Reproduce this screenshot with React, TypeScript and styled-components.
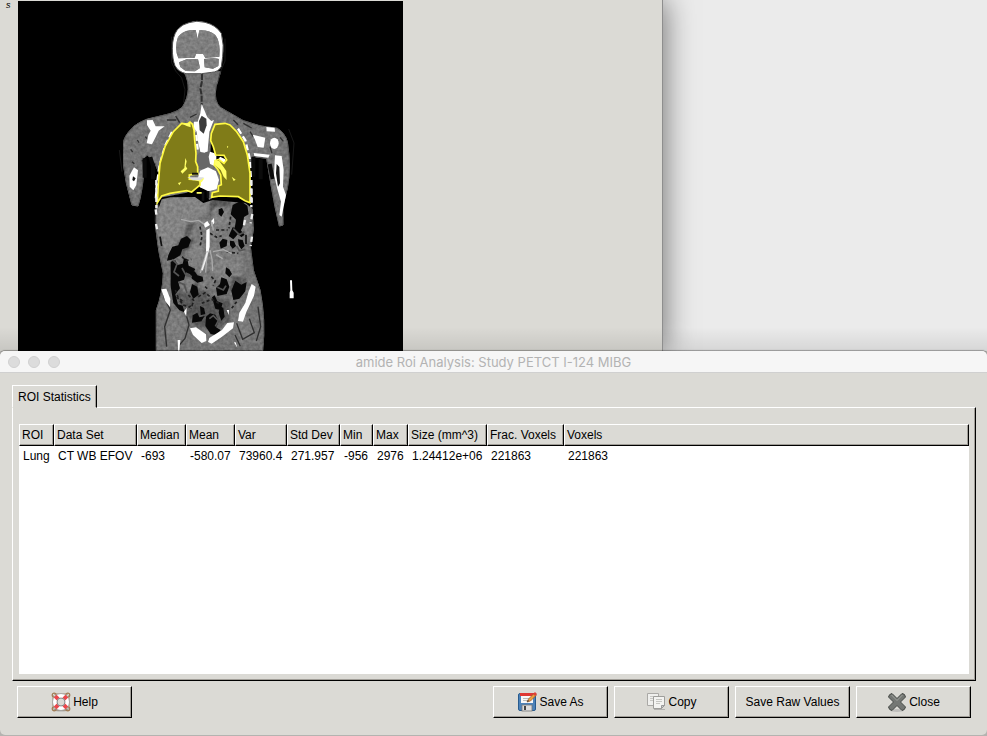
import React from "react";
import styled, { createGlobalStyle, css } from "styled-components";

const face = "#dbdad5";

const GlobalStyle = createGlobalStyle`
  * { box-sizing: border-box; }
  body {
    margin: 0;
    background: #b4b3b0;
    color: #000;
    font: 12px/16px "Liberation Sans", Arial, Helvetica, sans-serif;
  }
`;

const raised = css`
  border: 1px solid;
  border-color: #fff #000 #000 #fff;
  box-shadow: inset -1px -1px 0 #a09d97;
`;

const Page = styled.div`
  display: flex;
  flex-direction: column;
  min-height: 100vh;
`;

const Desktop = styled.div`
  display: flex;
  background: linear-gradient(transparent calc(100% - 24px), rgba(0, 0, 0, 0.09)), #ebebeb;
`;

const StudyWindow = styled.main`
  display: flex;
  flex: 0 1 663px;
  padding-top: 1px;
  background: linear-gradient(transparent calc(100% - 24px), rgba(0, 0, 0, 0.09)), ${face};
  border-right: 1px solid #8e8e8e;
  box-shadow: 2px 0 28px rgba(0, 0, 0, 0.5);
  clip-path: inset(0 -40px 0 0);
`;

const AxisLabel = styled.span`
  width: 18px;
  padding-left: 6px;
  font: italic 9px/9px "Liberation Sans", Arial, sans-serif;
`;

const ScanView = styled.svg`
  display: block;
  width: 385px;
  height: 350px;
  background: #000;
`;

const Dialog = styled.section`
  display: flex;
  flex: 1;
  flex-direction: column;
  margin-bottom: 1px;
  background: ${face};
  border-radius: 5px;
  overflow: hidden;
  box-shadow: 0 -1px 1px rgba(0, 0, 0, 0.3);
  position: relative;
`;

const TitleBar = styled.header`
  display: grid;
  grid-template-columns: 1fr auto 1fr;
  align-items: center;
  height: 22px;
  padding: 0 8px;
  background: #f6f6f6;
  border-bottom: 1px solid #d0d0d0;
`;

const WindowControls = styled.div`
  display: flex;
  gap: 8px;
`;

const WindowControl = styled.button`
  width: 12px;
  height: 12px;
  padding: 0;
  border: 1px solid #d0d0d0;
  border-radius: 50%;
  background: #dcdcdc;
`;

const Title = styled.h1`
  margin: 0;
  color: #b3b3b3;
  font: 400 13px/20px Inter, Roboto, sans-serif;
`;

const DialogBody = styled.div`
  display: flex;
  flex: 1;
  flex-direction: column;
  padding: 12px 11px 17px 12px;
`;

const Tab = styled.button`
  align-self: flex-start;
  height: 23px;
  margin-bottom: -1px;
  padding: 0 5px;
  background: ${face};
  border: 1px solid;
  border-color: #fff #000 ${face} #fff;
  box-shadow: inset -1px 0 0 #a09d97;
  color: inherit;
  font: inherit;
  z-index: 1;
`;

const TabPanel = styled.div`
  ${raised}
  display: flex;
  flex: 1;
  padding: 16px 6px 6px;
`;

const ListView = styled.div`
  flex: 1;
  min-width: 0;
  background: #fff;
`;

const Table = styled.table`
  width: 100%;
  border-collapse: separate;
  border-spacing: 0;
  table-layout: fixed;
`;

const Column = styled.col<{ $width?: number }>`
  width: ${({ $width }) => ($width ? `${$width}px` : "auto")};
`;

const HeaderCell = styled.th`
  ${raised}
  height: 22px;
  padding: 0 2px;
  background: ${face};
  font-weight: 400;
  text-align: left;
  white-space: nowrap;
`;

const Cell = styled.td`
  height: 20px;
  padding: 0 0 0 4px;
  white-space: nowrap;
`;

const Actions = styled.footer`
  display: flex;
  gap: 6px;
  padding: 5px 5px 0;
`;

const ActionButton = styled.button<{ $first?: boolean }>`
  ${raised}
  display: flex;
  align-items: center;
  justify-content: center;
  gap: 2px;
  width: 115px;
  height: 32px;
  margin-right: ${({ $first }) => ($first ? "auto" : "0")};
  padding: 0;
  background: ${face};
  color: inherit;
  font: inherit;
`;

const Icon = styled.svg`
  width: 20px;
  height: 20px;
`;

const columns = [
  { label: "ROI", width: 35, value: "Lung" },
  { label: "Data Set", width: 83, value: "CT WB EFOV" },
  { label: "Median", width: 49, value: "-693" },
  { label: "Mean", width: 49, value: "-580.07" },
  { label: "Var", width: 52, value: "73960.4" },
  { label: "Std Dev", width: 53, value: "271.957" },
  { label: "Min", width: 33, value: "-956" },
  { label: "Max", width: 35, value: "2976" },
  { label: "Size (mm^3)", width: 79, value: "1.24412e+06" },
  { label: "Frac. Voxels", width: 77, value: "221863" },
  { label: "Voxels", width: undefined, value: "221863" },
];

const leftLung =
  "M95 70 113 72 120 66 127 72 132 90 134 120 138 160 137 185 143 200 143 222 118 225 118 238 150 240 150 255 138 265 125 276 110 272 60 280 35 288 22 308 25 250 30 190 45 140 70 95Z";
const rightLung =
  "M195 73 225 70 240 75 260 95 280 125 292 165 300 220 300 308 285 302 265 290 210 288 185 292 187 278 205 273 205 258 214 254 212 225 203 208 193 196 195 182 206 178 222 190 230 180 222 166 197 165 190 140 182 122 184 100Z";

const bowelGas = [
  "M175 765l12-25 18-4 8-20 18-8 12 12-8 22-18 6-6 18-20 12-20 4Z",
  "M182 785l14-4 6 14 16-4 4-16 10 2 4 20 20 10-10 18-18-8-6 22-18 6 6 20-14 18 8 30 14 4 6 20-16-6-18-22-8-50Z",
  "M240 820l14-6 8 12 16 4 2 14-18 4-16-12ZM246 852l16 8 4 24-16 12-10-20Z",
  "M328 728l10-12 14 4-2 18-18 8ZM360 722l12 2 6 14-10 8-8-10ZM384 718l14 2 6 18-10 10-8-12Z",
  "M356 708l12-26 20 4 16 18-10 8-10-10-14 16Z",
  "M368 615l24-12 20 14 4 26-14 8-4 30-12 22-14-4 6-40-16-16Z",
  "M326 628l10-4 6 12-8 14-8-8ZM348 802l10 6 8 14-8 10-12-12Z",
  "M318 864l12-12 4-20 16 6 8 22-8 22-28 6Z",
  "M364 872l12-30 18 12 16-8-4 28-18 22-18 4ZM306 892l8-6 8 18 16 6-6 20-16-4Z",
  "M248 946l14-8 6 14 16-4-10 16-28 4ZM288 950l12-10 16 4 10 20-8 18 14 8-12 16-18-4-16-24Z",
  "M330 918l10 6 4 26-10 12-8-24ZM270 918l12 6 4 18-14 4Z",
];

function ScanImage() {
  return (
    <ScanView viewBox="-276 3 1155 1050" role="img" aria-label="Coronal CT with lung region">
      <defs>
        <filter id="tissue" x="0" y="0" width="100%" height="100%" colorInterpolationFilters="sRGB">
          <feTurbulence type="fractalNoise" baseFrequency=".1" numOctaves="2" seed="8" result="noise" />
          <feColorMatrix in="noise" values=".2 0 0 0 .4 .2 0 0 0 .4 .2 0 0 0 .4 0 0 0 0 1" />
          <feComposite in2="SourceGraphic" operator="in" result="grain" />
          <feBlend in="SourceGraphic" in2="grain" mode="soft-light" />
        </filter>
        <filter id="soften" x="-5%" y="-5%" width="110%" height="110%">
          <feGaussianBlur stdDeviation="3" />
        </filter>
      </defs>
      <g filter="url(#tissue)">
        <path fill="#686868" stroke="#333" strokeWidth="3" d="M222 215C240 250 240 285 217 322Q205 333 180 341L110 358Q75 372 62 389 42 410 40 430L39 485Q46 550 66 615L84 618Q96 580 101 520L95 480 112 465 135 490 147 520 142 600 138 690Q144 750 160 820 158 880 139 930L139 1052H458Q468 960 450 870L430 810 421 740 430 690 424 590 418 510 428 470 470 475 484 560 495 620 508 678 519 675 518 620 532 565Q544 500 532 425 525 400 502 385 450 382 400 362L332 323Q310 305 318 260L332 215Z" />
        <g filter="url(#soften)">
          <path fill="#898989" d="M142 605 175 585 245 580 306 590 300 630 270 650 250 690 225 725 205 740 173 760 150 720 139 660Z" />
          <path fill="#777" d="M248 655 280 650 300 680 390 700 402 740 398 820 360 855 310 820 280 810 270 850 230 840 230 770 205 750Z" />
          <path fill="#858585" d="M305 625 345 620 360 650 350 680 315 680ZM400 620 415 650 420 700 405 710ZM232 740 270 728 282 760 270 800 235 790ZM315 790 350 775 387 795 390 830 350 848 315 825ZM285 930 325 925 340 965 315 990 285 980Z" />
          <path fill="#333" d="M232 670 252 666 246 695 225 725 222 695ZM200 720 255 716 245 740 210 770ZM185 800 250 805 280 840 300 870 280 930 240 960 200 900ZM250 945 300 890 360 900 360 960 320 988 250 978ZM365 825 410 835 385 898 360 870ZM300 595 365 600 360 618 315 622 296 650Z" />
          <path fill="#777" d="M214 832h30l12 18-8 22-24 10-18-22ZM258 830 310 825 316 850 292 876 266 866ZM172 950 205 925 225 960 218 1015 190 1025 170 990ZM375 965 402 945 432 970 430 1010 400 1030 382 1005Z" />
        </g>
      </g>
      <g fill="none" stroke="#303030" strokeWidth="6">
        <path d="M276 222v22l-5 22 4 20v28" strokeDasharray="18 4" />
        <path d="M171 360h28M197 348l12 20M240 352l20-10M370 360l14 14M400 370l25 14M510 412l10 12" strokeWidth="4" />
        <path d="M104 475v58M121 471l8 27v40M430 470v60M452 478v60M479 492l9 45" strokeWidth="12" stroke="#0b0b0b" />
        <path d="M160 885 181 930 164 980 170 1040M226 935 237 975 225 1015 204 1040M380 970l18 48 35-20-15-42M444 920l8 60-13 43M375 1005l16 34" strokeWidth="4" />
        <path d="M150 710l5 28M408 704v28" strokeWidth="5" stroke="#111" />
        <path d="M62 448l6 8M82 420l5 8M66 485l7 6M106 410l5 6M480 440l6 20M420 395l10 15" strokeWidth="4" />
      </g>
      <path fill="#fff" stroke="#555" strokeWidth="3" d="M237 68Q260 60 285 67 318 75 334 100 343 137 338 170L334 200Q325 216 305 217L275 221 228 221Q204 215 195 197 187 178 187 145 187 110 202 89 217 72 237 68Z" />
      <path fill="#7d7d7d" filter="url(#tissue)" d="M240 91 257 90 263 116 268 91Q300 90 316 105 328 120 329 150L328 170 286 174 279 161 258 162 254 173 205 175Q192 145 204 111 216 94 240 91ZM207 187 230 178 264 178 270 204 255 214 227 213 211 201ZM282 177 310 174 327 177 325 198 309 206 284 202Z" />
      <g fill="#080808">{bowelGas.map((shape) => <path key={shape} d={shape} />)}</g>
      <g fill="none" stroke="#555" strokeWidth="5">
        <path d="M187 778l14 14-9 24 15 12M216 804l12 22 18 4M205 846l18 8 8 25M370 686l18 18 15-9M380 738l8 14 18-4M298 956l12-9 15 15-9 17M322 862l18 8 8-13" />
      </g>
      <g fill="none" stroke="#202020" strokeWidth="5" strokeDasharray="9 7">
        <path d="M200 890l20 25 18 6 12-12M235 885l16 16-8 26M265 890l20-12 15 12M275 910l30-12 22 12M285 860l12 10M216 770l12 12 16-4M300 700l20 12 15-5M318 690h35M362 650l-5 35M350 756l35 4M270 680l6 30-6 30M304 830l12 12-6 16M380 905l-15 20M196 870l8 22 16 14" />
      </g>
      <g fill="#fff">
        <path d="M275 312 284 333 292 352 304 363 312 360 306 374 298 396 295 430 292 458 272 459 265 430 260 395 250 380 252 365 263 365 271 340Z" />
        <path fill="#3b3b3b" d="M275 347 289 356 290 376 281 401 269 391 267 363Z" />
        <path d="M111 361 128 360 137 379 164 379 146 392 139 407 126 433 110 430 115 405 122 392 111 375ZM428 404l38 9-5 30-18-2-8-22ZM431 459l48 5-4 9-42-5ZM469 381l25 2 1 12-25-1Z" />
        <ellipse cx="493" cy="430" rx="13" ry="17" />
        <path d="M72 502 84 511 79 555 70 571 59 560 58 527ZM495 466 515 468 521 510 519 560 528 585 515 650 508 645 513 605 502 567 492 525Z" />
        <path fill="#171717" d="M69 529 77 535 72 544 67 540ZM500 492l8 9 2 49-6 10-6-40Z" />
        <path d="M540 841h6l1 30 4 7v17h-12v-17l2-7ZM154 868l15-2 12 31-1 24-14-17ZM425 852l12 8-5 27-23 49-10 29-15-2 4-25 18-29 10-35ZM240 985l18-3 30 21 1 20-14 6-26-24ZM298 1014l38-24 16-21 20-2-3 18-34 26-30 20-11-5ZM222 935l8-12-1 27ZM350 930h7l-1 15ZM203 1020h8l-3 32h-4ZM372 1027h5l5 16Z" />
        <path d="M289 691l10-6v55l-4 18-7-2ZM281 671l11-8 8 12-15 8ZM304 662l8-8 1 14-8 12Z" />
      </g>
      <path d="M213 658l29 7 24-4 17 12M306 666l4 26M292 754l-10 27-11 38M293 758l-4 30-2 30M300 750l6 28 2 36M309 755l32-6 24 12M318 764l20 12" fill="none" stroke="#aaa" strokeWidth="4" />
      <path d="M292 757l-6 22-10 32" fill="none" stroke="#eee" strokeWidth="5" />
      <g transform="translate(120 300)">
        <path fill="#000" d="M183 117 202 155 225 165 234 190 221 213 210 190 180 190ZM22 295 110 278 145 260 172 269 177 300 202 286 225 284 263 280 309 311 309 327 286 309 188 300 160 309 135 291 62 292 35 298 26 324Z" />
        <path fill="#676767" d="M139 168 151 155 177 155 183 187 175 207 145 207Z" />
        <path fill="#fff" d="M147 103h28l-3 50-8 5-12-2ZM180 155 199 161 199 180 192 197 180 192 176 170ZM150 212 174 202 198 214 207 240 200 268 175 274 150 262 142 240ZM210 170 226 178 230 200 218 207 203 184Z" />
        <path d="M133 80v17l6 7 4 45M66 96l-21 43-16 55-9 64-3 46M264 86l22 35 13 54 4 65 2 68" fill="none" stroke="#fff" strokeWidth="7" strokeDasharray="18 9" />
        <path fill="#807c18" stroke="#fff943" strokeWidth="5" d={leftLung} />
        <path fill="#807c18" stroke="#fff943" strokeWidth="5" d={rightLung} />
        <path fill="#ffff66" d="M98 72 121 69 122 82 110 78ZM106 174l4 10-3 14 5 8-15 15-5-7 11-10ZM84 249l10-3-6 10ZM193 180l15 3 21 30 1 27-9-10-9-20-18-15ZM245 230l12 9-6 4ZM231 137l4 3-3 5ZM118 235h45l-8 12ZM140 276h18v5h-18Z" />
        <path fill="#111" d="M155 275h8v28h-8ZM170 273h8v21h-8ZM126 218h18v6h-18Z" />
        <path fill="#ddd" d="M112 232h50l-10 9h-24Z" />
      </g>
      <g stroke="#eee" strokeWidth="7" fill="none">
        <path d="M139 540v85M137 628l3 24M138 672l5 24M424 540v82M427 642l-5 28M426 710l-4 28M405 660l-4 20" strokeDasharray="16 9" />
      </g>
      <g fill="none" stroke="#252525" strokeWidth="2">
        <path d="M185 110v78l12 25 18 21 10 35-4 39M345 116v67l-14 33-7 30M28 450l8 65M536 387l16 42-7 95" />
      </g>
    </ScanView>
  );
}

function HelpIcon() {
  return (
    <Icon viewBox="0 0 20 20" aria-hidden="true">
      <ellipse cx="10" cy="17.5" rx="8" ry="2" fill="#888" opacity=".5" />
      <g fill="none" stroke="#a07c56" strokeWidth="1.2"><circle cx="3.2" cy="3.2" r="2" /><circle cx="16.8" cy="3.2" r="2" /><circle cx="3.2" cy="16.8" r="2" /><circle cx="16.8" cy="16.8" r="2" /><path d="M3 2h14M3 18h14M2 3v14M18 3v14" strokeWidth=".8" /></g>
      <circle cx="10" cy="10" r="8.5" fill="#fff" stroke="#999" strokeWidth=".8" />
      <path d="m4.2 4.2 3 3M15.8 4.2l-3 3M4.2 15.8l3-3M15.8 15.8l-3-3" stroke="#ed474c" strokeWidth="4" />
      <circle cx="10" cy="10" r="4" fill={face} stroke="#888" strokeWidth="1" />
    </Icon>
  );
}

function SaveIcon() {
  return (
    <Icon viewBox="0 0 20 20" aria-hidden="true">
      <rect x="1.5" y="1.5" width="17" height="17" rx="1.5" fill="#4d83ba" stroke="#285b8e" />
      <path fill="#f8f8f8" d="M4 2h12v9H4z" /><path fill="#df3834" d="M3 1h14v3H3z" />
      <path d="M6 6.5h8M6 8.5h6" stroke="#bbb" /><rect x="5" y="13" width="10" height="6" fill="#ddd" stroke="#777" strokeWidth=".8" />
      <path d="M7 14h2v4H7z" fill="#444" />
      <path d="m10 10 1.5-3 6-6 2 2-6 6Z" fill="#ed9f3d" stroke="#8d562f" strokeWidth=".7" /><path d="m16 2 2-2 2 2-2 2Z" fill="#dd4036" /><path d="m10 10 1-2 1 1Z" fill="#333" />
    </Icon>
  );
}

function CopyIcon() {
  return (
    <Icon viewBox="0 0 20 20" aria-hidden="true">
      <path d="M8 17.5h11" stroke="#888" opacity=".5" />
      <path d="M1.5 1.5h11v12h-11z" fill="#efefed" stroke="#aaa9a6" /><path d="M4 4.5h7M4 6.5h7M4 8.5h5" stroke="#c8c8c5" />
      <path d="M7.5 4.5h11v9l-3 3h-8z" fill="#f3f3f1" stroke="#9e9e9b" /><path d="M10 7.5h6M10 9.5h6M10 11.5h4" stroke="#c5c5c1" /><path d="M15.5 16.5v-3h3z" fill="#ccc" stroke="#999" />
    </Icon>
  );
}

function CloseIcon() {
  return (
    <Icon viewBox="0 0 20 20" aria-hidden="true">
      <ellipse cx="10" cy="18.5" rx="7" ry="1.5" fill="#aaa" opacity=".6" />
      <path d="m5 1.5 5 5 5-5q3 0 3.5 3.5l-5 5 5 5q-.5 3-3.5 3.5l-5-5-5 5q-3-.5-3.5-3.5l5-5-5-5Q2 2 5 1.5Z" fill="#747774" stroke="#454846" strokeLinejoin="round" />
      <path d="m4.5 3 5.5 5.5L15.5 3" stroke="#a0a39f" fill="none" />
    </Icon>
  );
}

export default function App() {
  return (
    <>
      <GlobalStyle />
      <Page>
        <Desktop>
          <StudyWindow><AxisLabel>s</AxisLabel><ScanImage /></StudyWindow>
        </Desktop>
        <Dialog aria-labelledby="dialog-title">
          <TitleBar>
            <WindowControls>
              <WindowControl aria-label="Close window" />
              <WindowControl aria-label="Minimize window" />
              <WindowControl aria-label="Zoom window" />
            </WindowControls>
            <Title id="dialog-title">amide Roi Analysis: Study PETCT I-124 MIBG</Title>
          </TitleBar>
          <DialogBody>
            <Tab role="tab" id="statistics-tab" aria-selected="true" aria-controls="statistics">ROI Statistics</Tab>
            <TabPanel role="tabpanel" id="statistics" aria-labelledby="statistics-tab">
              <ListView>
                <Table>
                  <colgroup>{columns.map((c) => <Column key={c.label} $width={c.width} />)}</colgroup>
                  <thead><tr>{columns.map((c) => <HeaderCell key={c.label} scope="col">{c.label}</HeaderCell>)}</tr></thead>
                  <tbody><tr>{columns.map((c) => <Cell key={c.label}>{c.value}</Cell>)}</tr></tbody>
                </Table>
              </ListView>
            </TabPanel>
            <Actions>
              <ActionButton $first><HelpIcon />Help</ActionButton>
              <ActionButton><SaveIcon />Save As</ActionButton>
              <ActionButton><CopyIcon />Copy</ActionButton>
              <ActionButton>Save Raw Values</ActionButton>
              <ActionButton><CloseIcon />Close</ActionButton>
            </Actions>
          </DialogBody>
        </Dialog>
      </Page>
    </>
  );
}
